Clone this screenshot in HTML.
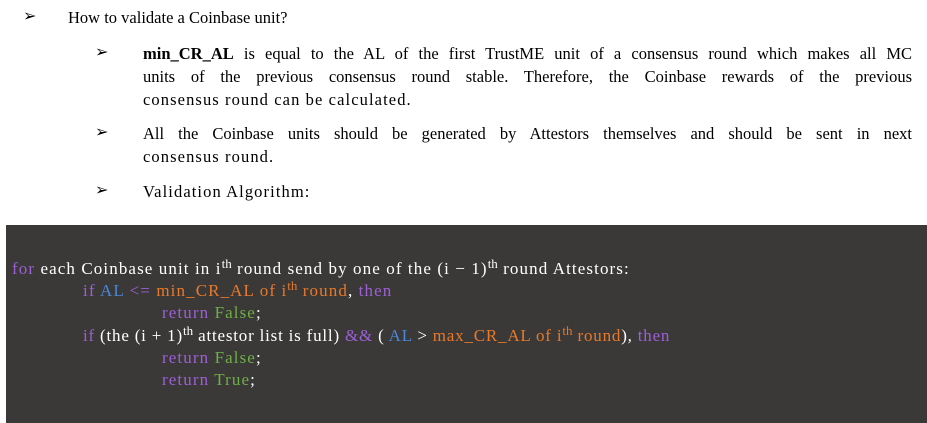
<!DOCTYPE html>
<html><head><meta charset="utf-8"><style>
body{margin:0;width:927px;height:423px;background:#fff;position:relative;overflow:hidden;font-family:"Liberation Serif","DejaVu Serif",serif;font-size:16.5px;color:#000}
.a{position:absolute;white-space:nowrap;line-height:20px}
.j{text-align:justify;text-align-last:justify;width:769px}
.bl{position:absolute;font-size:16px;font-family:"DejaVu Sans",sans-serif}
.box{position:absolute;left:6px;top:225px;width:921px;height:198px;background:#3a3938}
.k{font-size:17px;letter-spacing:1.1px}
.w{letter-spacing:1.1px}
.c{color:#fff}
.p{color:#9d5fd6}.b{color:#4a86d8}.o{color:#e8792a}.g{color:#6fae48}
sup{font-size:13px;line-height:0;vertical-align:6px;letter-spacing:0}
</style></head><body>
<div class="bl" style="left:23px;top:6px">➢</div>
<div class="a" style="left:68px;top:8px">How to validate a Coinbase unit?</div>
<div class="bl" style="left:95px;top:42px">➢</div>
<div class="a j" style="left:143px;top:44px"><b>min_CR_AL</b> is equal to the AL of the first TrustME unit of a consensus round which makes all MC</div>
<div class="a j" style="left:143px;top:67px">units of the previous consensus round stable. Therefore, the Coinbase rewards of the previous</div>
<div class="a w" style="left:143px;top:90px">consensus round can be calculated.</div>
<div class="bl" style="left:95px;top:122px">➢</div>
<div class="a j" style="left:143px;top:124px">All the Coinbase units should be generated by Attestors themselves and should be sent in next</div>
<div class="a w" style="left:143px;top:147px">consensus round.</div>
<div class="bl" style="left:95px;top:180px">➢</div>
<div class="a w" style="left:143px;top:182px">Validation Algorithm:</div>
<div class="box"></div>
<div class="a c k" style="left:12px;top:259px"><span class="p">for</span> each Coinbase unit in i<sup>th</sup> round send by one of the (i − 1)<sup>th</sup> round Attestors:</div>
<div class="a k" style="left:83px;top:281px"><span class="p">if</span> <span class="b">AL</span> <span class="p">&lt;=</span> <span class="o">min_CR_AL of i<sup>th</sup> round</span><span class="c">,</span> <span class="p">then</span></div>
<div class="a k" style="left:162px;top:303px"><span class="p">return</span> <span class="g">False</span><span class="c">;</span></div>
<div class="a c k" style="left:83px;top:326px;letter-spacing:0.8px"><span class="p">if</span> (the (i + 1)<sup>th</sup> attestor list is full) <span class="p">&amp;&amp;</span> ( <span class="b">AL</span> &gt; <span class="o">max_CR_AL of i<sup>th</sup> round</span>), <span class="p">then</span></div>
<div class="a k" style="left:162px;top:348px"><span class="p">return</span> <span class="g">False</span><span class="c">;</span></div>
<div class="a k" style="left:162px;top:370px"><span class="p">return</span> <span class="g">True</span><span class="c">;</span></div>
</body></html>
